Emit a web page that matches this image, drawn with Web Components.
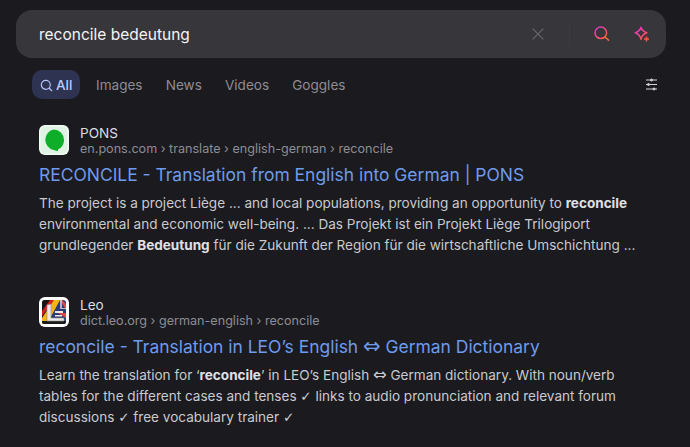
<!DOCTYPE html>
<html>
<head>
<meta charset="utf-8">
<style>
  html, body { margin: 0; background: #1a1a1f; height: 447px; overflow: hidden; }
  body { font-family: Inter, "Liberation Sans", sans-serif; }
  .sym { font-family: "DejaVu Sans", sans-serif; line-height: 0; }
  .arrow { font-size: 1.2em; }
</style>
</head>
<body>
<search-page>
  <search-bar query="reconcile bedeutung"></search-bar>
  <tab-row></tab-row>
  <search-result site="PONS" crumbs="en.pons.com › translate › english-german › reconcile" icon="pons">
    <span slot="title">RECONCILE - Translation from English into German | PONS</span>
    The project is a project Liège ... and local populations, providing an opportunity to <b>reconcile</b><br>environmental and economic well-being. ... Das Projekt ist ein Projekt Liège Trilogiport<br>grundlegender <b>Bedeutung</b> für die Zukunft der Region für die wirtschaftliche Umschichtung ...
  </search-result>
  <search-result site="Leo" crumbs="dict.leo.org › german-english › reconcile" icon="leo">
    <span slot="title">reconcile - Translation in LEO’s English <span class="sym arrow">⇔</span> German Dictionary</span>
    Learn the translation for ‘<b>reconcile</b>’ in LEO’s English <span class="sym arrow">⇔</span> German dictionary. With noun/verb<br>tables for the different cases and tenses <span class="sym">✓</span> links to audio pronunciation and relevant forum<br>discussions <span class="sym">✓</span> free vocabulary trainer <span class="sym">✓</span>
  </search-result>
</search-page>

<script>
class SearchPage extends HTMLElement {
  constructor() {
    super();
    this.attachShadow({ mode: 'open' }).innerHTML = `
      <style>
        :host { display: flex; flex-direction: column; padding: 10px 24px 0 16px; color: #e6e6ea; }
        ::slotted(search-result) { margin-left: 23px; }
      </style>
      <slot></slot>`;
  }
}

class SearchBar extends HTMLElement {
  constructor() {
    super();
    this.attachShadow({ mode: 'open' });
  }

  connectedCallback() {
    this.shadowRoot.innerHTML = `
      <style>
        :host { display: flex; align-items: center; height: 48px; border-radius: 16px; background: #36363b; padding: 0 16px 0 23px; }
        .q { flex: 1; font-size: 15.5px; color: #f4f4f6; }
        .x { margin-right: 25px; }
        .sep { width: 1px; height: 24px; background: #3c3c41; margin-right: 24px; }
        .go { margin-right: 24px; }
        svg { display: block; }
      </style>
      <div class="q">${this.getAttribute('query')}</div>
      <svg class="x" width="12" height="12" viewBox="0 0 12 12" fill="none" stroke="#66666b" stroke-width="1.2"><path d="M.6.6l10.800 10.800M11.400.6L.6 11.400"/></svg>
      <div class="sep"></div>
      <svg class="go" width="16" height="16" viewBox="0 0 16 16" fill="none" stroke-width="1.5">
        <defs><linearGradient id="g1" x1="0" y1="0" x2="1" y2="1"><stop offset="0" stop-color="#d934d8"/><stop offset="1" stop-color="#ff6a2b"/></linearGradient></defs>
        <circle cx="6.800" cy="6.800" r="5.800" stroke="url(#g1)"/><path d="M11 11l4 3.600" stroke="#ff6a3a"/>
      </svg>
      <svg width="16" height="16" viewBox="0 0 16 16" fill="none" stroke-width="1.5">
        <defs><linearGradient id="g2" x1="0" y1="0" x2="1" y2="1"><stop offset="0" stop-color="#d934d8"/><stop offset="1" stop-color="#ff5a3a"/></linearGradient></defs>
        <path d="M7 1.200c.9 3 2.300 4.400 5.800 5.600-3.500 1.200-4.900 2.800-5.800 6.400-.9-3.600-2.300-5.200-5.800-6.400C4.700 5.600 6.100 4.200 7 1.200z" stroke="url(#g2)" stroke-linejoin="round"/>
        <path d="M12.500 10.500v5M10 13h5" stroke="#ff5a3a"/>
      </svg>`;
  }
}

class TabRow extends HTMLElement {
  constructor() {
    super();
    this.attachShadow({ mode: 'open' }).innerHTML = `
      <style>
        :host { display: flex; align-items: center; height: 29px; margin: 12px 0 0 16px; font-size: 13.56px; color: #8d8d94; }
        .tab { padding: 1px 11.600px 0; line-height: 28px; }
        .on { display: flex; align-items: center; gap: 3px; background: #2d3350; color: #bccaff; border-radius: 10px; padding: 1px 8px 0; font-weight: 500; margin-right: 4px; }
        .opts { margin-left: auto; margin-right: 8px; display: block; }
      </style>
      <div class="tab on"><svg width="13" height="13" viewBox="0 0 13 13" fill="none" stroke="#b6c2f7" stroke-width="1.200"><circle cx="5.800" cy="5.800" r="4.500"/><path d="M9 9l3 3"/></svg>All</div>
      <div class="tab">Images</div>
      <div class="tab">News</div>
      <div class="tab">Videos</div>
      <div class="tab">Goggles</div>
      <svg class="opts" width="13" height="13" viewBox="0 0 13 13" fill="#d4d4d8" stroke="#d4d4d8" stroke-width="1">
        <path d="M1 2h11M1 6.500h11M1 11h11"/>
        <circle cx="6.500" cy="2" r="1"/><circle cx="3.500" cy="6.500" r="1"/><circle cx="9" cy="11" r="1"/>
      </svg>`;
  }
}

const ICONS = {
  pons: `<svg width="30" height="30" viewBox="0 0 30 30">
      <rect width="30" height="30" rx="6" fill="#f2fbf3"/>
      <rect x="1.500" y="1.500" width="27" height="27" rx="5" fill="#dff2e3"/>
      <path d="M14.500 4.500a10.500 10.500 0 0 1 10.500 10.500c0 4.500-2.500 8-6 9.500v1.500c-1 0-3-.5-4.500-1a10.500 10.500 0 0 1 0-20.500z" fill="#0fae2a"/>
    </svg>`,
  leo: `<svg width="30" height="30" viewBox="0 0 30 30">
      <rect width="30" height="30" rx="6" fill="#fff"/>
      <rect x="3" y="3" width="24" height="24" rx="3" fill="#2b3a78"/>
      <path d="M6 3h9L3 22V6a3 3 0 0 1 3-3z" fill="#161616"/>
      <path d="M11 3h5L3 19v-5z" fill="#cf1f1f"/>
      <path d="M15 3h6L8 27H3v-6z" fill="#f2b512"/>
      <path d="M21 3h2l4 4v6zM27 16v5l-8-5z" fill="#e04848"/>
      <path d="M21 3h2v8h4v1h-6z" fill="#f4e6e6" opacity=".7"/>
      <path d="M3 24h24v1a2 2 0 0 1-2 2H5a2 2 0 0 1-2-2z" fill="#1a1a1a"/>
      <path d="M8 8l4-1v14h13v3H8z" fill="#ece8e0" stroke="#8a8a8a" stroke-width=".6"/>
      <path d="M16 14h8v2h-8zM16 18h7v1.500h-7z" fill="#ece8e0"/>
    </svg>`
};

class SearchResult extends HTMLElement {
  constructor() {
    super();
    this.attachShadow({ mode: 'open' });
  }

  connectedCallback() {
    this.shadowRoot.innerHTML = `
      <style>
        :host { display: block; }
        :host(:nth-of-type(1)) { margin-top: 26px; }
        :host(:nth-of-type(2)) { margin-top: 40px; }
        .head { display: flex; align-items: center; gap: 11px; height: 32px; }
        .ic { width: 30px; height: 30px; display: block; align-self: flex-start; }
        .ic svg { display: block; }
        .site { font-size: 13.56px; line-height: 16px; color: #dcdce0; }
        .crumbs { font-size: 12.6px; line-height: 16px; color: #8d8d94; }
        .title { font-size: 17.45px; line-height: 24px; color: #6f9bec; margin-top: 6px; white-space: nowrap; }
        .desc { font-size: 13.56px; line-height: 21.2px; color: #c9c9ce; margin-top: 6px; white-space: nowrap; }
        ::slotted(b) { color: #e0e0e4; }
      </style>
      <div class="head">
        <div class="ic">${ICONS[this.getAttribute('icon')]}</div>
        <div>
          <div class="site">${this.getAttribute('site')}</div>
          <div class="crumbs">${this.getAttribute('crumbs')}</div>
        </div>
      </div>
      <div class="title"><slot name="title"></slot></div>
      <div class="desc"><slot></slot></div>`;
  }
}

customElements.define('search-page', SearchPage);
customElements.define('search-bar', SearchBar);
customElements.define('tab-row', TabRow);
customElements.define('search-result', SearchResult);
</script>
</body>
</html>
